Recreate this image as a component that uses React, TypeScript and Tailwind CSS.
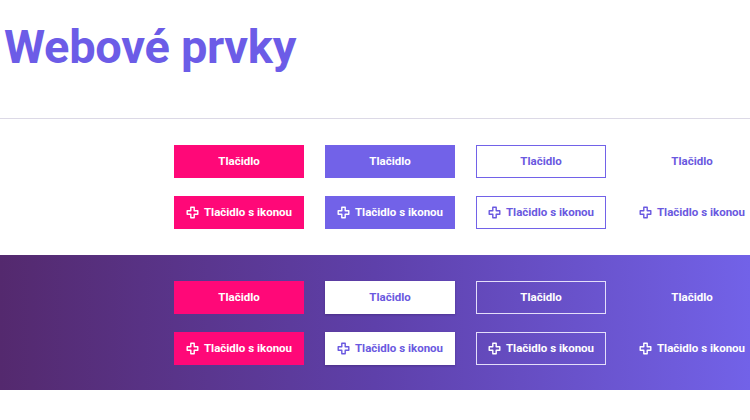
import React from 'react';

const PlusIcon = () => (
  <svg width="13" height="13" viewBox="0 0 13 13" fill="none" className="shrink-0">
    <path
      d="M4.8 1.2h3.4v3.6h3.6v3.4H8.2v3.6H4.8V8.2H1.2V4.8h3.6z"
      stroke="currentColor"
      strokeWidth="1.4"
      strokeLinejoin="round"
    />
  </svg>
);

type Variant = 'pink' | 'solid' | 'outline' | 'text' | 'white' | 'outlineLight' | 'textLight';

const styles: Record<Variant, string> = {
  pink: 'bg-[#ff0878] text-white',
  solid: 'bg-[#7262e8] text-white',
  outline: 'border-[1.5px] border-[#7262e8] text-[#6a59e0]',
  text: 'text-[#6a59e0]',
  white: 'bg-white text-[#6a59e0] shadow-[0_1px_2px_rgba(40,20,80,0.35)]',
  outlineLight: 'border-[1.5px] border-[#e4defa] text-white',
  textLight: 'text-white',
};

const Btn = ({ variant, icon }: { variant: Variant; icon?: boolean }) => (
  <button
    className={`h-[33px] w-[130px] flex items-center justify-center gap-[5px] text-[11.5px] font-bold ${styles[variant]}`}
  >
    {icon && <PlusIcon />}
    <span>{icon ? 'Tlačidlo s ikonou' : 'Tlačidlo'}</span>
  </button>
);

const Grid = ({ row }: { row: Variant[] }) => (
  <div className="grid grid-cols-[repeat(4,130px)] gap-x-[21px] gap-y-[18px] pl-[174px]">
    {row.map((v, i) => (
      <Btn key={`a${i}`} variant={v} />
    ))}
    {row.map((v, i) => (
      <Btn key={`b${i}`} variant={v} icon />
    ))}
  </div>
);

export default function App() {
  return (
    <div className="w-[750px] h-[420px] overflow-hidden bg-white font-['Roboto',sans-serif]">
      <h1 className="pl-[4px] pt-[17px] h-[118px] text-[47px] leading-[60px] font-bold text-[#6c5ce7] tracking-[-0.3px]">
        Webové prvky
      </h1>
      <div className="h-px bg-[#dcd9e6]" />
      <div className="pt-[26px] h-[136px]">
        <Grid row={['pink', 'solid', 'outline', 'text']} />
      </div>
      <div className="h-[135px] pt-[26px] bg-gradient-to-r from-[#54296e] via-[#5e40aa] to-[#7262e8]">
        <Grid row={['pink', 'white', 'outlineLight', 'textLight']} />
      </div>
    </div>
  );
}
